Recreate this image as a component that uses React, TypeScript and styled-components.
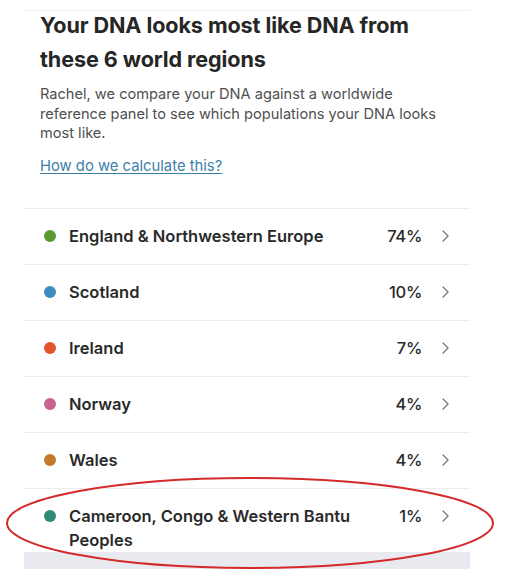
import React from "react";
import styled, { createGlobalStyle } from "styled-components";

const Global = createGlobalStyle`
  html, body { margin: 0; padding: 0; background: #ffffff; }
  body { font-family: Inter, "Noto Sans", "Liberation Sans", sans-serif; }
`;

const Page = styled.div`
  position: relative;
  width: 507px;
  height: 584px;
  overflow: hidden;
  background: #fff;
`;

const Panel = styled.div`
  margin: 0 0 0 24px;
  width: 446px;
  padding-top: 10px;
`;

const TopRule = styled.div`
  height: 1px;
  background: #f0f0f0;
`;

const Header = styled.div`
  padding: 0 16px;
`;

const Title = styled.h1`
  margin: -3px 0 0;
  font-size: 21.6px;
  line-height: 34px;
  font-weight: 700;
  color: #262626;
  letter-spacing: -0.1px;
`;

const Intro = styled.p`
  margin: 9px 0 0;
  font-size: 14.6px;
  line-height: 19.5px;
  color: #4f4f4f;
`;

const Link = styled.a`
  display: inline-block;
  margin-top: 12px;
  font-size: 14.8px;
  line-height: 20px;
  color: #3c7fa8;
  text-decoration: underline;
  text-underline-offset: 2px;
`;

const List = styled.ul`
  list-style: none;
  margin: 32px 0 0;
  padding: 0;
`;

const Row = styled.li<{ $last?: boolean }>`
  display: flex;
  align-items: flex-start;
  border-top: 1px solid #ececec;
  padding: ${(p) => (p.$last ? "15px 0 0" : "15px 0")};
  min-height: 25px;
`;

const Dot = styled.span<{ $color: string }>`
  flex: none;
  width: 12px;
  height: 12px;
  border-radius: 50%;
  background: ${(p) => p.$color};
  margin: 6.5px 13px 0 20px;
`;

const Label = styled.span`
  flex: 1;
  font-size: 16.5px;
  line-height: 24px;
  font-weight: 600;
  color: #2a2a2a;
  padding-right: 20px;
`;

const Percent = styled.span`
  flex: none;
  font-size: 16.5px;
  line-height: 24px;
  font-weight: 500;
  color: #2a2a2a;
  letter-spacing: -0.3px;
`;

const Chevron = styled.svg`
  flex: none;
  margin: 6px 21px 0 20px;
  width: 7px;
  height: 12px;
`;

const Footer = styled.div`
  height: 17px;
  background: #e9eaef;
`;

const Annotation = styled.svg`
  position: absolute;
  left: 0;
  top: 0;
  pointer-events: none;
`;

const regions = [
  { name: "England & Northwestern Europe", pct: "74%", color: "#5b9a33" },
  { name: "Scotland", pct: "10%", color: "#3e8cc0" },
  { name: "Ireland", pct: "7%", color: "#e0552c" },
  { name: "Norway", pct: "4%", color: "#c8648f" },
  { name: "Wales", pct: "4%", color: "#c57a2b" },
  { name: "Cameroon, Congo & Western Bantu Peoples", pct: "1%", color: "#2f8b74" },
];

export default function App() {
  return (
    <Page>
      <Global />
      <Panel>
        <TopRule />
        <Header>
          <Title>Your DNA looks most like DNA from these 6 world regions</Title>
          <Intro>
            Rachel, we compare your DNA against a worldwide reference panel to see which
            populations your DNA looks most like.
          </Intro>
          <Link href="#">How do we calculate this?</Link>
        </Header>
        <List>
          {regions.map((r, i) => (
            <Row key={r.name} $last={i === regions.length - 1}>
              <Dot $color={r.color} />
              <Label>{r.name}</Label>
              <Percent>{r.pct}</Percent>
              <Chevron viewBox="0 0 7 12">
                <path d="M1 1 L6 6 L1 11" fill="none" stroke="#7a7a7a" strokeWidth="1.4" strokeLinecap="round" strokeLinejoin="round" />
              </Chevron>
            </Row>
          ))}
        </List>
        <Footer />
      </Panel>
      <Annotation width="507" height="584" viewBox="0 0 507 584">
        <ellipse cx="250" cy="523" rx="243" ry="45" fill="none" stroke="#d42a2a" strokeWidth="2" />
      </Annotation>
    </Page>
  );
}
